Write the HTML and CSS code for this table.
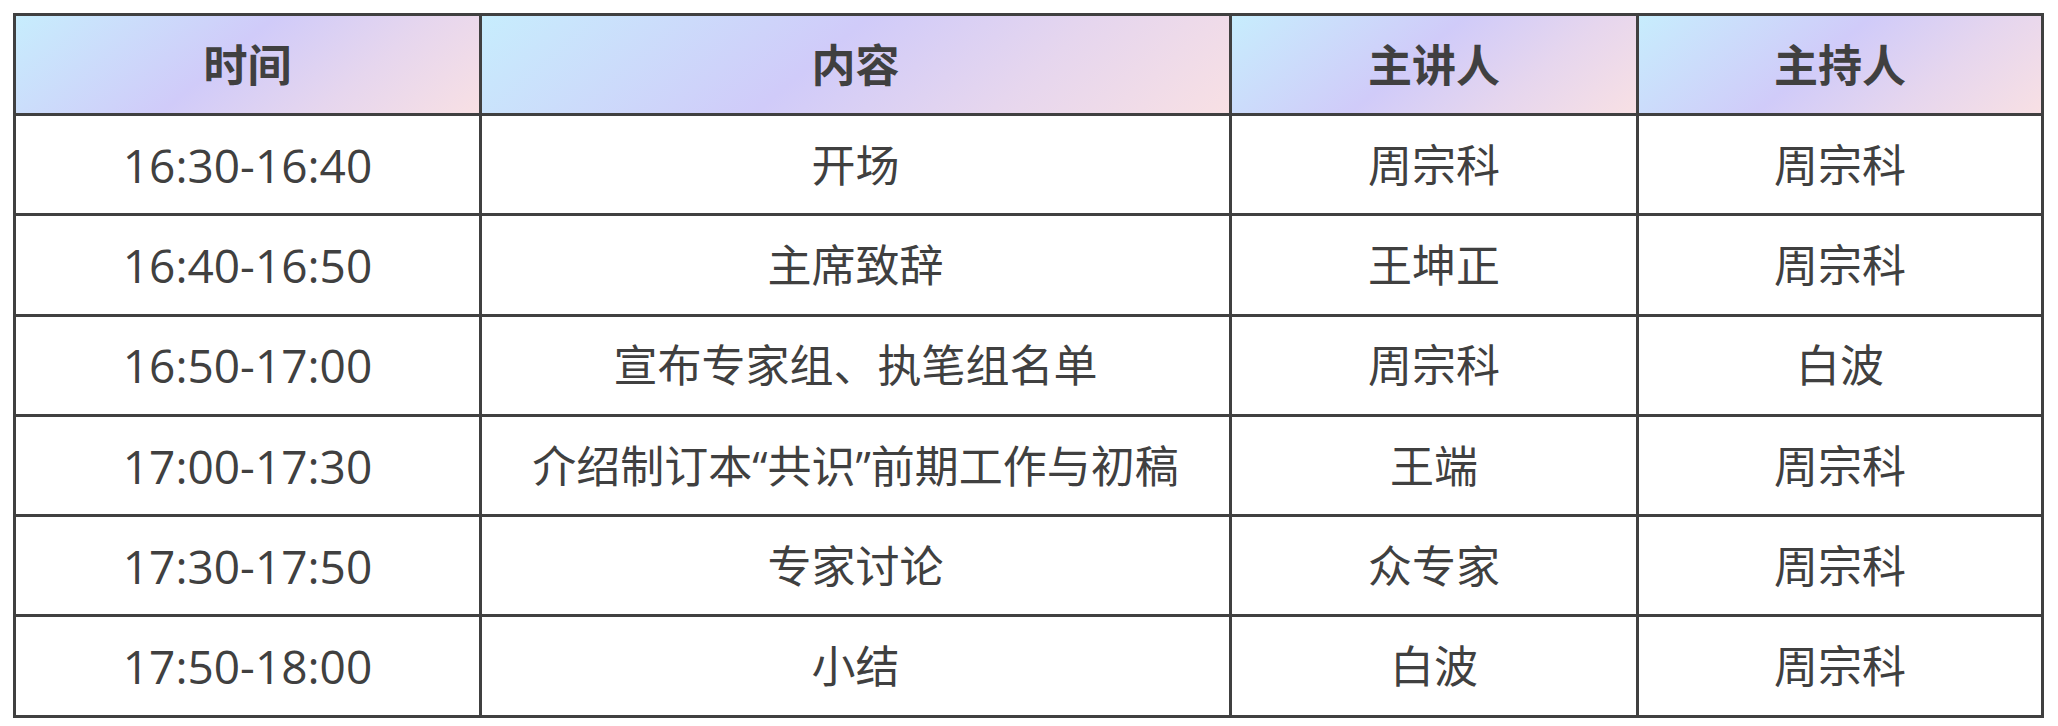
FILE: index.html
```html
<!DOCTYPE html>
<html lang="zh-CN">
<head>
<meta charset="utf-8">
<title>议程</title>
<link rel="stylesheet" href="styles.css">
</head>
<body>
<table class="agenda">
  <colgroup>
    <col class="c-time">
    <col class="c-content">
    <col class="c-speaker">
    <col class="c-host">
  </colgroup>
  <thead>
    <tr>
      <th>时间</th>
      <th>内容</th>
      <th>主讲人</th>
      <th>主持人</th>
    </tr>
  </thead>
  <tbody>
    <tr><td class="time">16:30-16:40</td><td>开场</td><td>周宗科</td><td>周宗科</td></tr>
    <tr><td class="time">16:40-16:50</td><td>主席致辞</td><td>王坤正</td><td>周宗科</td></tr>
    <tr><td class="time">16:50-17:00</td><td>宣布专家组、执笔组名单</td><td>周宗科</td><td>白波</td></tr>
    <tr><td class="time">17:00-17:30</td><td>介绍制订本“共识”前期工作与初稿</td><td>王端</td><td>周宗科</td></tr>
    <tr><td class="time">17:30-17:50</td><td>专家讨论</td><td>众专家</td><td>周宗科</td></tr>
    <tr><td class="time">17:50-18:00</td><td>小结</td><td>白波</td><td>周宗科</td></tr>
  </tbody>
</table>
</body>
</html>
```

FILE: styles.css
```css
html, body {
  margin: 0;
  padding: 0;
  background: #ffffff;
}

body {
  padding: 13px 0 0 13px;
  font-family: "Open Sans", "Noto Sans CJK SC", sans-serif;
  color: #404040;
}

.agenda {
  border-collapse: separate;
  border-spacing: 0;
  table-layout: fixed;
  width: 2031px;
  border-left: 3px solid #404040;
  border-top: 3px solid #404040;
}

.c-time { width: 466px; }
.c-content { width: 750px; }
.c-speaker { width: 407px; }
.c-host { width: 405px; }

.agenda th,
.agenda td {
  box-sizing: border-box;
  height: 100.3px;
  padding: 0;
  border-right: 3px solid #404040;
  border-bottom: 3px solid #404040;
  text-align: center;
  vertical-align: middle;
  font-size: 44px;
  line-height: 1;
  white-space: nowrap;
}

.agenda th {
  height: 100px;
  font-weight: 700;
  background: linear-gradient(140deg, #c7edfd 0%, #d0cbf9 45%, #e6d6ee 72%, #f8e0e4 100%);
}

.agenda td {
  font-weight: 400;
  background: #ffffff;
}

.agenda td.time {
  font-size: 46px;
}
```
